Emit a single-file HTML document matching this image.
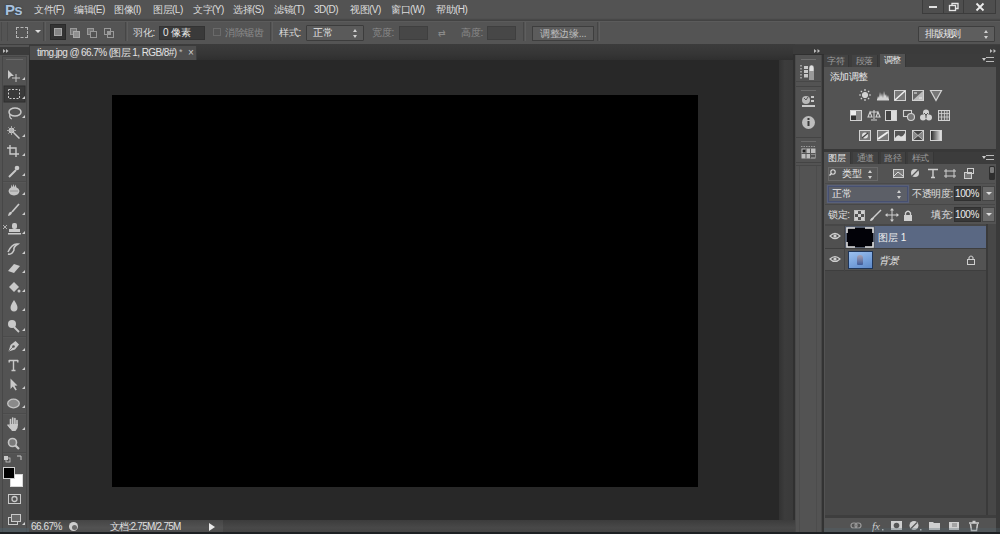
<!DOCTYPE html>
<html><head><meta charset="utf-8">
<style>
*{margin:0;padding:0;box-sizing:border-box}
html,body{width:1000px;height:534px;overflow:hidden;background:#535353;font-family:"Liberation Sans",sans-serif;font-size:9px;color:#e0e0e0}
.a{position:absolute}
#menubar{left:0;top:0;width:1000px;height:21px;background:linear-gradient(#535353 0,#535353 18px,#4d4d4d 19px,#434343 20px)}
#opts{left:0;top:21px;width:1000px;height:23px;background:#545454;border-top:1px solid #5b5b5b}#opts>div{margin-top:-2px}
#gap{left:0;top:44px;width:1000px;height:1px;background:#3f3f3f}
#tools{left:0;top:0;width:29px;height:534px;}
#tabbar{left:29px;top:44px;width:766px;height:16px;background:linear-gradient(#3c3c3c,#363636 60%,#2f2f2f)}
#doctab{left:30px;top:46px;width:167px;height:14px;background:#4e4e4e;border-right:1px solid #3c3c3c}
#pasteboard{left:29px;top:60px;width:750px;height:460px;background:#282828}
#image{left:112px;top:95px;width:586px;height:392px;background:#000}
#vstrip{left:779px;top:60px;width:14px;height:460px;background:linear-gradient(90deg,#323232,#3c3c3c 40%,#3a3a3a)}
#dock{left:793px;top:45px;width:31px;height:489px;background:#303030}
#dockcol{left:795px;top:55px;width:27px;height:479px;background:#535353}
#panel{left:824px;top:46px;width:176px;height:488px;background:#3b3b3b}
#status{left:29px;top:520px;width:766px;height:14px;background:linear-gradient(#3c3c3c,#484848 55%,#424242)}
.ps{left:5px;top:1px;font-size:15px;line-height:17px;font-weight:bold;color:#a9c0dc;letter-spacing:-0.8px;text-shadow:0 0 1px #2a3a4a,0 0 2px #34404c}
.mi{top:4px;font-size:10px;line-height:12px;color:#dcdcdc;white-space:nowrap;letter-spacing:-0.5px}
.sep{top:2px;width:3px;height:19px;border-left:1px solid #464646;border-right:1px solid #5e5e5e}
.ot{top:7px;font-size:10px;line-height:12px;color:#dedede;white-space:nowrap;letter-spacing:-0.3px}
.dim{color:#8a8a8a}
.inp{top:6px;height:14px;background:#3a3a3a;border:1px solid #333;font-size:10px;line-height:12px;color:#e8e8e8;white-space:nowrap}
.sel{top:5px;height:16px;background:#5a5a5a;border:1px solid #3c3c3c;border-radius:1px;font-size:10px;line-height:14px;color:#e8e8e8;white-space:nowrap}
.ud{position:absolute;right:5px;top:3px;width:5px;height:9px}.ud::before,.ud::after{content:"";position:absolute;left:0;border-left:2.5px solid transparent;border-right:2.5px solid transparent}.ud::before{top:0;border-bottom:3px solid #d0d0d0}.ud::after{bottom:0;border-top:3px solid #d0d0d0}
.btn{top:6px;height:15px;background:#5c5c5c;border:1px solid #3e3e3e;font-size:10px;line-height:13px;color:#bcbcbc;text-align:center;white-space:nowrap;letter-spacing:-0.3px}
.ptab{height:12px;font-size:9px;line-height:13px;color:#9a9a9a;text-align:center;background:#424242;border-right:1px solid #363636;letter-spacing:-0.3px}
.ptab.on{background:#535353;color:#e8e8e8}
.pmenu{width:8px;height:5px;border-top:1px solid #bbb;border-bottom:1px solid #bbb}.pmenu::before{content:"";position:absolute;left:-4px;top:0;border-left:2.5px solid transparent;border-right:2.5px solid transparent;border-top:3px solid #ccc}
.pinp{width:27px;height:15px;background:#383838;border:1px solid #303030;font-size:10px;line-height:13px;color:#ececec;text-align:right;padding-right:2px;letter-spacing:-0.4px}
.pbtn{width:13px;height:15px;background:#6a6a6a;border:1px solid #444}
.pbtn::after{content:"";position:absolute;left:3px;top:5px;border-left:3px solid transparent;border-right:3px solid transparent;border-top:3px solid #ddd}
</style></head><body>
<div id="menubar" class="a">
<div class="a ps">Ps</div>
<div class="a mi" style="left:34px">文件(F)</div>
<div class="a mi" style="left:74px">编辑(E)</div>
<div class="a mi" style="left:114px">图像(I)</div>
<div class="a mi" style="left:153px">图层(L)</div>
<div class="a mi" style="left:193px">文字(Y)</div>
<div class="a mi" style="left:233px">选择(S)</div>
<div class="a mi" style="left:274px">滤镜(T)</div>
<div class="a mi" style="left:314px">3D(D)</div>
<div class="a mi" style="left:350px">视图(V)</div>
<div class="a mi" style="left:391px">窗口(W)</div>
<div class="a mi" style="left:436px">帮助(H)</div>
<div class="a" style="left:922px;top:0;width:74px;height:14px;background:#4e4e4e;border:1px solid #3c3c3c;border-top:none"></div>
<div class="a" style="left:943px;top:0;width:1px;height:13px;background:#3c3c3c"></div>
<div class="a" style="left:963px;top:0;width:1px;height:13px;background:#3c3c3c"></div>
<div class="a" style="left:929px;top:6px;width:8px;height:2px;background:#e0e0e0"></div>
<svg class="a" style="left:948px;top:2px" width="12" height="10" viewBox="0 0 12 10"><rect x="1.5" y="3.5" width="6" height="5" fill="none" stroke="#e6e6e6" stroke-width="1.3"/><path d="M4 3 V1.5 H10 V6.5 H8" fill="none" stroke="#e6e6e6" stroke-width="1.3"/></svg>
<svg class="a" style="left:975px;top:2px" width="10" height="10" viewBox="0 0 10 10"><path d="M1.5 1.5 L8.5 8.5 M8.5 1.5 L1.5 8.5" stroke="#ececec" stroke-width="1.8"/></svg>

</div>
<div id="opts" class="a">
<div class="a" style="left:1px;top:2px;width:1px;height:19px;background:#4a4a4a"></div>
<div class="a" style="left:7px;top:2px;width:1px;height:19px;background:#4a4a4a"></div>
<div class="a" style="left:16px;top:7px;width:12px;height:11px;border:1px dashed #b4b4b4"></div>
<div class="a" style="left:35px;top:10px;width:0;height:0;border-left:3px solid transparent;border-right:3px solid transparent;border-top:3px solid #ddd"></div>
<div class="a sep" style="left:43px"></div>
<div class="a" style="left:50px;top:4px;width:16px;height:16px;background:#333;border:1px solid #2a2a2a"></div>
<div class="a" style="left:54px;top:8px;width:8px;height:8px;border:1px solid #a8a8a8;background:#858585"></div>
<div class="a" style="left:70px;top:8px;width:7px;height:7px;border:1px solid #999;background:#777"></div>
<div class="a" style="left:73px;top:11px;width:7px;height:7px;border:1px solid #aaa;background:#8f8f8f"></div>
<div class="a" style="left:87px;top:8px;width:7px;height:7px;border:1px solid #999;background:#777"></div>
<div class="a" style="left:90px;top:11px;width:7px;height:7px;border:1px solid #999;background:#535353"></div>
<div class="a" style="left:104px;top:8px;width:7px;height:7px;border:1px solid #999"></div>
<div class="a" style="left:107px;top:11px;width:7px;height:7px;border:1px solid #999"></div>
<div class="a" style="left:107px;top:11px;width:4px;height:4px;background:#999"></div>
<div class="a sep" style="left:125px"></div>
<div class="a ot" style="left:133px">羽化:</div>
<div class="a inp" style="left:159px;width:46px"><span style="padding-left:3px">0 像素</span></div>
<div class="a" style="left:213px;top:8px;width:8px;height:8px;border:1px solid #6a6a6a"></div>
<div class="a ot dim" style="left:225px">消除锯齿</div>
<div class="a sep" style="left:270px"></div>
<div class="a ot" style="left:279px">样式:</div>
<div class="a sel" style="left:306px;width:58px"><span style="padding-left:6px">正常</span><i class="ud"></i></div>
<div class="a ot dim" style="left:372px">宽度:</div>
<div class="a inp" style="left:399px;width:29px;background:#474747;border-color:#3f3f3f"></div>
<div class="a ot dim" style="left:438px;font-size:9px">⇄</div>
<div class="a ot dim" style="left:461px">高度:</div>
<div class="a inp" style="left:487px;width:29px;background:#474747;border-color:#3f3f3f"></div>
<div class="a sep" style="left:523px"></div>
<div class="a btn" style="left:532px;width:62px">调整边缘...</div>
<div class="a sep" style="left:597px"></div>
<div class="a sel" style="left:918px;top:6px;width:77px;height:16px;background:#5e5e5e;border-color:#3e3e3e"><span style="padding-left:6px;letter-spacing:-1.2px">排版规则</span><i class="ud"></i></div>
</div>
<div id="gap" class="a"></div>
<div id="tools" class="a"><svg class="a" style="left:0;top:0" width="29" height="534" viewBox="0 0 29 534"><rect x="0" y="47" width="29" height="8" fill="#3b3b3b"/><path d="M3 49 L5.5 51 L3 53 Z M6 49 L8.5 51 L6 53 Z" fill="#bdbdbd"/><rect x="2.5" y="56.5" width="24" height="477" fill="none" stroke="#474747"/><rect x="4" y="86" width="21" height="16" fill="#3a3a3a" stroke="#2e2e2e"/><rect x="3" y="181" width="23" height="1" fill="#4b4b4b"/><rect x="3" y="182" width="23" height="1" fill="#575757"/><rect x="3" y="336" width="23" height="1" fill="#4b4b4b"/><rect x="3" y="337" width="23" height="1" fill="#575757"/><rect x="3" y="413" width="23" height="1" fill="#4b4b4b"/><rect x="3" y="414" width="23" height="1" fill="#575757"/><rect x="3" y="452" width="23" height="1" fill="#4b4b4b"/><rect x="3" y="453" width="23" height="1" fill="#575757"/><rect x="6" y="59" width="17" height="1" fill="#6a6a6a"/><g transform="translate(0,75)"><path d="M8 -5 L8 4 L11 1 L14 1 Z" fill="#c9c9c9"/><path d="M16 -1 V7 M12 3 H20" stroke="#c9c9c9" stroke-width="1"/></g><g transform="translate(0,94)"><rect x="8.5" y="-4.5" width="11" height="9" fill="none" stroke="#c9c9c9" stroke-dasharray="2,1.5"/></g><g transform="translate(0,113)"><ellipse cx="15" cy="-1" rx="6" ry="4" fill="none" stroke="#c9c9c9" stroke-width="1.5"/><path d="M10 1 Q9 5 12 6" stroke="#c9c9c9" fill="none" stroke-width="1.3"/></g><g transform="translate(0,132)"><circle cx="11.5" cy="-1.5" r="2.8" fill="#c9c9c9"/><path d="M11.5 -6 V3 M7 -1.5 H16 M8.3 -4.7 L14.7 1.7 M8.3 1.7 L14.7 -4.7" stroke="#b0b0b0" stroke-width="0.9"/><path d="M13.5 0.5 L19.5 6.5" stroke="#c9c9c9" stroke-width="1.5"/></g><g transform="translate(0,151)"><path d="M10 -6 V3 H19 M7 -3 H16 V6" stroke="#c9c9c9" fill="none" stroke-width="1.4"/></g><g transform="translate(0,171)"><path d="M9 6 L16 -1" stroke="#c9c9c9" stroke-width="2"/><circle cx="17" cy="-3" r="2.3" fill="#c9c9c9"/></g><g transform="translate(0,190)"><path d="M8.5 1 Q9 -2 11 -2.5 L11.5 -5.5 L12.5 -2.8 L13.5 -6 L14.5 -2.8 L15.5 -5.5 L16.5 -2.5 Q19 -2 19.5 1 Q19 5 14 5.5 Q9 5 8.5 1 Z" fill="#c4c4c4"/><path d="M10 1 H18" stroke="#8a8a8a" stroke-width="0.8"/></g><g transform="translate(0,210)"><path d="M19 -6 L12 2" stroke="#c9c9c9" stroke-width="1.6"/><path d="M8 6 Q9 1 12 2 Q12 5 8 6 Z" fill="#c9c9c9"/></g><g transform="translate(0,229)"><rect x="12" y="-6" width="5" height="6" rx="2" fill="#c9c9c9"/><rect x="9" y="0" width="11" height="3" fill="#c9c9c9"/><rect x="8" y="4" width="13" height="1.5" fill="#c9c9c9"/><path d="M3 -4 L7 0 M7 -4 L3 0" stroke="#c9c9c9" stroke-width="0.8"/></g><g transform="translate(0,249)"><path d="M8 3 Q12 -6 18 -5 Q13 -2 14 1 Q12 6 8 5" fill="none" stroke="#c9c9c9" stroke-width="1.5"/></g><g transform="translate(0,268)"><path d="M8 3 L14 -4 L20 -2 L14 5 Z" fill="#c9c9c9"/></g><g transform="translate(0,287)"><path d="M9 0 L14 -5 L19 0 L14 5 Z" fill="#c9c9c9"/><circle cx="19" cy="4" r="1.5" fill="#c9c9c9"/></g><g transform="translate(0,306)"><path d="M14 -6 Q19 1 17 4 Q14 7 11 4 Q9 1 14 -6 Z" fill="#c9c9c9"/></g><g transform="translate(0,326)"><circle cx="12" cy="-2" r="4" fill="#c9c9c9"/><path d="M14 1 L19 6" stroke="#c9c9c9" stroke-width="1.8"/></g><g transform="translate(0,346)"><path d="M8.5 5.5 L10.5 -1 L15.5 -5 L19 -1.5 L15 3.5 Z" fill="#c9c9c9"/><circle cx="13.5" cy="0.5" r="1.3" fill="#535353"/><path d="M8.5 5.5 L13 1" stroke="#535353" stroke-width="0.7"/></g><g transform="translate(0,365)"><path d="M9 -4.5 H18 M13.5 -5 V5.5 M11.5 5.5 H15.5 M9.2 -5 V-2.5 M17.8 -5 V-2.5" stroke="#c9c9c9" stroke-width="1.4" fill="none"/></g><g transform="translate(0,384)"><path d="M10.5 -5.5 L10.5 5 L12.8 2.5 L15.5 6.5 L16.8 5.8 L14.5 1.8 L17.5 1.5 Z" fill="#c9c9c9"/></g><g transform="translate(0,403)"><ellipse cx="13.5" cy="0.5" rx="5.8" ry="4.3" fill="#8a8a8a" stroke="#c4c4c4" stroke-width="1.3"/></g><g transform="translate(0,425)"><path d="M10.5 0 V-5.5 M12.7 -0.5 V-7 M14.9 -0.5 V-6.5 M17 0 V-4.5 M8 0 L10.5 3" stroke="#c9c9c9" stroke-width="1.6" stroke-linecap="round"/><path d="M9.5 -1 H18 L17.5 3 L15.5 6 H12 L9.5 2.5 Z" fill="#c9c9c9"/></g><g transform="translate(0,444)"><circle cx="12.5" cy="-1.5" r="4" fill="#7a7a7a" stroke="#c4c4c4" stroke-width="1.6"/><path d="M15.5 1.5 L19 5" stroke="#c9c9c9" stroke-width="2.2"/></g><g transform="translate(0,459)"><rect x="4" y="-3" width="4" height="4" fill="#c9c9c9"/><rect x="6" y="-1" width="4" height="4" fill="none" stroke="#c9c9c9" stroke-width="0.8"/><path d="M17 -3 H21 V1" stroke="#c9c9c9" fill="none" stroke-width="1"/></g><g transform="translate(0,499)"><rect x="8.5" y="-4.5" width="12" height="9" fill="none" stroke="#c9c9c9"/><circle cx="14.5" cy="0" r="2.5" fill="none" stroke="#c9c9c9" stroke-width="1.3"/></g><g transform="translate(0,522)"><rect x="8.5" y="-4.5" width="9" height="7" fill="#535353" stroke="#c9c9c9"/><rect x="11.5" y="-7.5" width="9" height="7" fill="#6a6a6a" stroke="#c9c9c9"/></g><path d="M22 80 L25 80 L25 77 Z" fill="#cfcfcf"/><path d="M22 99 L25 99 L25 96 Z" fill="#cfcfcf"/><path d="M22 118 L25 118 L25 115 Z" fill="#cfcfcf"/><path d="M22 137 L25 137 L25 134 Z" fill="#cfcfcf"/><path d="M22 156 L25 156 L25 153 Z" fill="#cfcfcf"/><path d="M22 176 L25 176 L25 173 Z" fill="#cfcfcf"/><path d="M22 195 L25 195 L25 192 Z" fill="#cfcfcf"/><path d="M22 215 L25 215 L25 212 Z" fill="#cfcfcf"/><path d="M22 234 L25 234 L25 231 Z" fill="#cfcfcf"/><path d="M22 254 L25 254 L25 251 Z" fill="#cfcfcf"/><path d="M22 273 L25 273 L25 270 Z" fill="#cfcfcf"/><path d="M22 292 L25 292 L25 289 Z" fill="#cfcfcf"/><path d="M22 311 L25 311 L25 308 Z" fill="#cfcfcf"/><path d="M22 331 L25 331 L25 328 Z" fill="#cfcfcf"/><path d="M22 351 L25 351 L25 348 Z" fill="#cfcfcf"/><path d="M22 370 L25 370 L25 367 Z" fill="#cfcfcf"/><path d="M22 389 L25 389 L25 386 Z" fill="#cfcfcf"/><path d="M22 408 L25 408 L25 405 Z" fill="#cfcfcf"/><path d="M22 430 L25 430 L25 427 Z" fill="#cfcfcf"/><path d="M22 525 L25 525 L25 522 Z" fill="#cfcfcf"/><rect x="3.5" y="467.5" width="11" height="11" fill="#000" stroke="#d8d8d8"/><rect x="10.5" y="474.5" width="12" height="12" fill="#fff" stroke="#d8d8d8"/><rect x="3.5" y="467.5" width="11" height="11" fill="#000" stroke="#cfcfcf"/></svg></div>
<div id="tabbar" class="a"></div>
<div id="doctab" class="a"><span class="a" style="left:7px;top:1px;font-size:10px;line-height:12px;color:#e2e2e2;white-space:nowrap;letter-spacing:-0.6px">timg.jpg @ 66.7% (图层 1, RGB/8#)</span><span class="a" style="left:149px;top:0px;font-size:9px;line-height:12px;color:#bbb">*</span><span class="a" style="left:158px;top:1px;font-size:10px;line-height:12px;color:#cfcfcf">×</span></div>
<div id="pasteboard" class="a"></div>
<div id="image" class="a"></div>
<div id="vstrip" class="a"></div>
<div id="dock" class="a"></div>
<div class="a" style="left:793px;top:45px;width:207px;height:9px;background:#3b3b3b"></div>
<svg class="a" style="left:793px;top:46px" width="207" height="488" viewBox="0 0 207 488">
<path d="M21 3 L23.5 5 L21 7 Z M24.5 3 L27 5 L24.5 7 Z" fill="#bdbdbd"/>
<path d="M197 3 L199.5 5 L197 7 Z M200.5 3 L203 5 L200.5 7 Z" fill="#bdbdbd"/>
</svg>
<div class="a" style="left:795px;top:55px;width:27px;height:479px;background:#535353;border-left:1px solid #4a4a4a;border-right:1px solid #474747"></div>
<svg class="a" style="left:795px;top:55px" width="27" height="479" viewBox="0 0 27 479">
<rect x="6" y="4" width="15" height="1" fill="#6e6e6e"/>
<rect x="1" y="31" width="25" height="1" fill="#444"/>
<rect x="6" y="35" width="15" height="1" fill="#6e6e6e"/>
<rect x="1" y="82" width="25" height="1" fill="#444"/>
<rect x="6" y="86" width="15" height="1" fill="#6e6e6e"/>
<rect x="1" y="107" width="25" height="1" fill="#444"/><rect x="1" y="110" width="25" height="1" fill="#474747"/><rect x="4" y="111" width="1" height="368" fill="#4c4c4c"/><rect x="21" y="111" width="1" height="368" fill="#4c4c4c"/>
<g fill="#9a9a9a"><rect x="5" y="10" width="2" height="1.5"/><rect x="5" y="13" width="2" height="1.5"/><rect x="5" y="16" width="2" height="1.5"/><rect x="5" y="19" width="2" height="1.5"/><rect x="5" y="22" width="2" height="1.5"/></g>
<g fill="#c8c8c8"><rect x="9" y="11" width="4" height="3"/><rect x="9" y="15" width="4" height="3"/><rect x="9" y="19" width="4" height="3.5"/></g>
<path d="M14 25 V13 Q14 10 16.5 10 Q19 10 19 13 V25 Z" fill="#9a9a9a"/><path d="M14.5 16 V13 Q14.5 10.5 16.5 10.5 Q18.5 10.5 18.5 13 V16 Z" fill="#e0e0e0"/>
<rect x="1" y="26" width="25" height="1" fill="#474747"/>
<circle cx="11" cy="45" r="4" fill="#b8b8b8"/><path d="M9 43 L11 45 L13 42" stroke="#555" stroke-width="1" fill="none"/>
<rect x="16" y="41" width="3" height="2" fill="#c8c8c8"/><rect x="16" y="45" width="3" height="2" fill="#c8c8c8"/>
<rect x="7" y="50" width="13" height="2" fill="#c8c8c8"/>
<circle cx="13.5" cy="67.5" r="6.5" fill="#bdbdbd"/>
<rect x="12.5" y="66" width="2" height="5" fill="#3a3a3a"/><rect x="12.5" y="63" width="2" height="2" fill="#3a3a3a"/>
<path d="M6 91.5 H21" stroke="#9a9a9a" stroke-dasharray="1.5,1"/>
<rect x="6.5" y="93.5" width="14" height="10" fill="#bdbdbd"/>
<path d="M6.5 98.5 H20.5 M11 93.5 V103.5 M15.5 93.5 V103.5" stroke="#555"/>
<rect x="7.5" y="94.5" width="3" height="3" fill="#222"/><rect x="16" y="99.5" width="4" height="3" fill="#555"/>
</svg>
<div class="a" style="left:822px;top:55px;width:2px;height:479px;background:#333"></div>

<div id="panel" class="a">
<div class="a" style="left:0;top:8px;width:176px;height:13px;background:#3c3c3c"></div>
<div class="a ptab" style="left:0px;top:9px;width:25px;height:12px">字符</div>
<div class="a ptab" style="left:28px;top:9px;width:26px;height:12px">段落</div>
<div class="a ptab on" style="left:56px;top:8px;width:26px;height:13px">调整</div>
<div class="a pmenu" style="left:162px;top:11px"></div><svg class="a" style="left:165px;top:2px" width="10" height="6" viewBox="0 0 10 6"><path d="M1 1 L3.5 3 L1 5 Z M4.5 1 L7 3 L4.5 5 Z" fill="#bdbdbd"/></svg>
<div class="a" style="left:0;top:21px;width:172px;height:82px;background:#535353"></div>
<div class="a" style="left:6px;top:25px;font-size:10px;line-height:12px;color:#e6e6e6;letter-spacing:-0.6px">添加调整</div>
<svg class="a" style="left:0;top:0" width="176" height="120" viewBox="0 0 176 120"><g transform="translate(41,49)" stroke="#d2d2d2" stroke-width="1.2"><circle r="2.5" fill="#d2d2d2"/><path d="M0 -6 V-4 M0 4 V6 M-6 0 H-4 M4 0 H6 M-4.2 -4.2 L-3 -3 M3 3 L4.2 4.2 M-4.2 4.2 L-3 3 M3 -3 L4.2 -4.2"/></g><g transform="translate(53,44)" fill="#d2d2d2"><path d="M0 10 L1 6 L2 8 L3 2 L4 7 L5 3 L6 8 L7 1 L8 6 L9 4 L10 8 L11 5 L12 10 Z"/><rect y="9" width="12" height="1.5"/></g><g transform="translate(70,44)"><rect x="0.5" y="0.5" width="11" height="10" fill="#777" stroke="#d2d2d2"/><path d="M1 10 L11 1" stroke="#eee" stroke-width="1.5"/></g><g transform="translate(88,44)"><rect x="0.5" y="0.5" width="11" height="10" fill="#666" stroke="#d2d2d2"/><path d="M1 10 L11 1 L11 10 Z" fill="#bbb"/><path d="M2 3 H5 M7 8 H10" stroke="#eee"/></g><g transform="translate(106,44)"><path d="M0.5 0.5 H11.5 L6 10.5 Z" fill="#777" stroke="#d2d2d2" stroke-width="1.2"/></g><g transform="translate(26,64)"><rect x="0.5" y="0.5" width="11" height="10" fill="#888" stroke="#d2d2d2"/><rect x="1" y="1" width="5" height="4" fill="#eee"/><rect x="1" y="6" width="5" height="4" fill="#333"/></g><g transform="translate(50,69)" stroke="#d2d2d2" fill="none" stroke-width="1.1"><path d="M0 -5 V4 M-4 -3 H4 M-6 2 L-4 -3 L-2 2 Z M2 2 L4 -3 L6 2 Z M-3 5 H3"/></g><g transform="translate(61,64)"><rect x="0.5" y="0.5" width="11" height="10" fill="#ddd" stroke="#d2d2d2"/><rect x="1" y="1" width="5" height="9" fill="#444"/></g><g transform="translate(79,64)" stroke="#d2d2d2" fill="none" stroke-width="1.1"><rect x="0.5" y="0.5" width="8" height="6"/><circle cx="8" cy="7" r="3.5" fill="#777"/></g><g transform="translate(102,69)" fill="#d2d2d2"><circle cx="0" cy="-2.5" r="3"/><circle cx="-3" cy="2.5" r="3"/><circle cx="3" cy="2.5" r="3"/><path d="M0 0 V3 M0 0 L-2 -2 M0 0 L2 -2" stroke="#555" stroke-width="1"/></g><g transform="translate(114,64)" stroke="#d2d2d2" fill="#666"><rect x="0.5" y="0.5" width="11" height="10"/><path d="M0.5 3.5 H11.5 M0.5 7 H11.5 M3.5 0.5 V10.5 M6.5 0.5 V10.5 M9 0.5 V10.5" stroke-width="0.8"/></g><g transform="translate(35,84)"><rect x="0.5" y="0.5" width="11" height="10" fill="#777" stroke="#d2d2d2"/><circle cx="6" cy="5.5" r="3" fill="#ddd"/><path d="M3 8 L9 3" stroke="#444" stroke-width="1.3"/></g><g transform="translate(53,84)"><rect x="0.5" y="0.5" width="11" height="10" fill="#777" stroke="#d2d2d2"/><path d="M1 9 L11 2" stroke="#eee" stroke-width="2"/></g><g transform="translate(70,84)"><rect x="0.5" y="0.5" width="11" height="10" fill="#555" stroke="#d2d2d2"/><path d="M1 8 Q4 4 6 6 Q8 8 11 3 L11 10 L1 10 Z" fill="#ddd"/></g><g transform="translate(88,84)"><rect x="0.5" y="0.5" width="11" height="10" fill="#888" stroke="#d2d2d2"/><path d="M1 1 L6 5.5 L11 1 M1 10 L6 5.5 L11 10" fill="#444" stroke="#ccc" stroke-width="0.8"/></g><g transform="translate(106,84)"><defs><linearGradient id="gm"><stop offset="0" stop-color="#222"/><stop offset="1" stop-color="#eee"/></linearGradient></defs><rect x="0.5" y="0.5" width="11" height="10" fill="url(#gm)" stroke="#d2d2d2"/></g></svg>
<div class="a" style="left:0;top:103px;width:176px;height:3px;background:#383838"></div>
<div class="a" style="left:0;top:106px;width:176px;height:12px;background:#3c3c3c"></div>
<div class="a ptab on" style="left:0px;top:106px;width:27px">图层</div>
<div class="a ptab" style="left:29px;top:106px;width:26px">通道</div>
<div class="a ptab" style="left:57px;top:106px;width:25px">路径</div>
<div class="a ptab" style="left:84px;top:106px;width:26px">样式</div>
<div class="a pmenu" style="left:162px;top:109px"></div>
<div class="a" style="left:0;top:118px;width:172px;height:370px;background:#535353"></div>
</div>

<div class="a" style="left:828px;top:167px;width:50px;height:14px;background:#565656;border:1px solid #686868;font-size:10px;line-height:12px;color:#e6e6e6;white-space:nowrap"><span style="padding-left:13px">类型</span><i class="ud" style="right:4px;top:2px"></i></div>
<svg class="a" style="left:824px;top:160px" width="176" height="100" viewBox="0 0 176 100">
<circle cx="9" cy="12" r="2.2" fill="none" stroke="#ddd" stroke-width="1.1"/><path d="M7.5 13.5 L5.5 15.5" stroke="#ddd" stroke-width="1.2"/>
<g fill="none" stroke="#cfcfcf">
<rect x="69.5" y="9.5" width="10" height="8" fill="#777"/>
<path d="M70 16 L74 12 L79 16" stroke="#ddd"/>
</g>
<circle cx="91" cy="13" r="4" fill="#cfcfcf"/><path d="M88 16 L94 10" stroke="#555" stroke-width="1.2"/>
<path d="M104 9.5 H114 M109 9.5 V17.5 M107 17.5 H111" stroke="#cfcfcf" stroke-width="1.4" fill="none"/>
<path d="M122 9 V18 M130 9 V18 M120 11 H132 M120 16 H132" stroke="#cfcfcf" stroke-width="1" fill="none"/>
<rect x="140.5" y="12.5" width="7" height="6" fill="#777" stroke="#cfcfcf"/><rect x="143.5" y="8.5" width="6" height="5" fill="none" stroke="#cfcfcf"/>
<rect x="165" y="6" width="6" height="14" rx="1.5" fill="#2e2e2e"/><rect x="166" y="7" width="4" height="6" rx="1" fill="#7a7a7a"/>
</svg>
<div class="a" style="left:825px;top:183px;width:170px;height:20px;border-top:1px solid #4a4a4a"></div>
<div class="a" style="left:828px;top:186px;width:80px;height:16px;background:#5c5f67;border:1px solid #475070;font-size:10px;line-height:14px;color:#ececec;white-space:nowrap;box-shadow:0 0 1px 1px #58607a"><span style="padding-left:3px">正常</span><i class="ud" style="right:5px;top:3px"></i></div>
<div class="a" style="left:912px;top:188px;font-size:10px;line-height:12px;color:#e0e0e0;letter-spacing:-0.4px;white-space:nowrap">不透明度:</div>
<div class="a pinp" style="left:954px;top:186px">100%</div>
<div class="a pbtn" style="left:982px;top:186px"></div>
<div class="a" style="left:825px;top:204px;width:170px;height:1px;background:#474747"></div>
<div class="a" style="left:828px;top:209px;font-size:10px;line-height:12px;color:#e0e0e0;letter-spacing:-0.4px;white-space:nowrap">锁定:</div>
<svg class="a" style="left:850px;top:206px" width="70" height="18" viewBox="0 0 70 18">
<g fill="#cfcfcf"><rect x="5" y="5" width="3" height="3"/><rect x="8" y="8" width="3" height="3"/><rect x="5" y="11" width="3" height="3"/><rect x="11" y="5" width="3" height="3"/><rect x="11" y="11" width="3" height="3"/></g>
<rect x="4.5" y="4.5" width="10" height="10" fill="none" stroke="#bbb"/>
<path d="M21 14 L31 4" stroke="#cfcfcf" stroke-width="1.5"/><path d="M20 15 Q21 11 24 12 Q23 15 20 15Z" fill="#cfcfcf"/>
<path d="M42 3 V15 M36 9 H48" stroke="#cfcfcf" stroke-width="1"/><path d="M42 2 L40 4.5 H44 Z M42 16 L40 13.5 H44 Z M35 9 L37.5 7 V11 Z M49 9 L46.5 7 V11 Z" fill="#cfcfcf"/>
<rect x="54" y="9" width="8" height="6" fill="#cfcfcf"/><path d="M55.5 9 V7 Q58 3.5 60.5 7 V9" fill="none" stroke="#cfcfcf" stroke-width="1.3"/>
</svg>
<div class="a" style="left:931px;top:209px;font-size:10px;line-height:12px;color:#e0e0e0;letter-spacing:-0.4px;white-space:nowrap">填充:</div>
<div class="a pinp" style="left:954px;top:207px">100%</div>
<div class="a pbtn" style="left:982px;top:207px"></div>
<div class="a" style="left:825px;top:224px;width:161px;height:291px;background:#474747"></div>
<div class="a" style="left:825px;top:226px;width:161px;height:23px;background:#505050;border-bottom:1px solid #3e3e3e"></div>
<div class="a" style="left:845px;top:226px;width:30px;height:22px;background:#525a6a"></div><div class="a" style="left:875px;top:226px;width:111px;height:22px;background:#5a6883"></div>
<div class="a" style="left:825px;top:249px;width:161px;height:22px;background:#535353;border-bottom:1px solid #3e3e3e"></div>
<div class="a" style="left:844px;top:224px;width:1px;height:48px;background:#444"></div>
<svg class="a" style="left:828px;top:228px" width="14" height="44" viewBox="0 0 14 44">
<path d="M2 8 Q7 3 12 8 Q7 13 2 8Z" fill="none" stroke="#cfcfcf" stroke-width="1.2"/><circle cx="7" cy="8" r="1.6" fill="#cfcfcf"/>
<path d="M2 31 Q7 26 12 31 Q7 36 2 31Z" fill="none" stroke="#cfcfcf" stroke-width="1.2"/><circle cx="7" cy="31" r="1.6" fill="#cfcfcf"/>
</svg>
<svg class="a" style="left:846px;top:227px" width="28" height="21" viewBox="0 0 28 21"><rect x="1" y="1" width="26" height="19" fill="#020208"/><path d="M1 6 V1 H9 M19 1 H27 V6 M27 15 V20 H19 M9 20 H1 V15" fill="none" stroke="#e0e0e0" stroke-width="1.6"/></svg>
<div class="a" style="left:878px;top:232px;font-size:10px;line-height:12px;color:#f0f0f0;white-space:nowrap">图层 1</div>
<div class="a" style="left:848px;top:251px;width:25px;height:18px;background:linear-gradient(160deg,#9cc0ee,#78a2dc 55%,#5d88c8);border:1px solid #1f3558"></div>
<div class="a" style="left:857px;top:255px;width:6px;height:10px;border-radius:3px 3px 1px 1px;background:linear-gradient(#a8a0b0,#3e5a9a)"></div>
<div class="a" style="left:879px;top:255px;font-size:10px;line-height:12px;color:#e8e8e8;font-style:italic;white-space:nowrap">背景</div>
<svg class="a" style="left:966px;top:254px" width="10" height="12" viewBox="0 0 10 12"><rect x="1.5" y="5.5" width="7" height="5" fill="none" stroke="#cfcfcf"/><path d="M3 5.5 V3.5 Q5 0.5 7 3.5 V5.5" fill="none" stroke="#cfcfcf" stroke-width="1.1"/></svg>
<div class="a" style="left:825px;top:515px;width:171px;height:3px;background:#3e3e3e"></div>
<div class="a" style="left:825px;top:518px;width:171px;height:16px;background:#535353"></div>
<svg class="a" style="left:824px;top:515px" width="176" height="19" viewBox="0 0 176 19">
<g stroke="#9a9a9a" fill="none" stroke-width="1.2"><rect x="27" y="8" width="6" height="5" rx="2.5"/><rect x="31" y="8" width="6" height="5" rx="2.5"/></g>
<text x="48" y="15" font-family="Liberation Serif" font-style="italic" font-size="11" fill="#d0d0d0">fx</text><rect x="58" y="14" width="1.5" height="1.5" fill="#ccc"/>
<rect x="67" y="6" width="11" height="9" fill="#cfcfcf"/><circle cx="72.5" cy="10.5" r="2.8" fill="#555"/>
<circle cx="90" cy="10.5" r="4.5" fill="#cfcfcf"/><path d="M87 13.5 L93 7.5" stroke="#555" stroke-width="1.3"/><rect x="96" y="14" width="1.5" height="1.5" fill="#ccc"/>
<path d="M105 7 H109 L110 8 H116 V15 H105 Z" fill="#cfcfcf"/>
<rect x="125" y="7" width="10" height="8" fill="#cfcfcf"/><path d="M128 9 H133 M128 11 H133" stroke="#777"/>
<path d="M145 8 H155 M146.5 9 L147.5 15.5 H152.5 L153.5 9 M148.5 6.5 H151.5" stroke="#cfcfcf" stroke-width="1.5" fill="none"/>
</svg>
<div class="a" style="left:986px;top:224px;width:10px;height:291px;background:#474747;border-left:2px solid #3a3a3a"></div>
<div class="a" style="left:996px;top:46px;width:4px;height:488px;background:#3a3a3a"></div>
<div id="status" class="a">
<div class="a" style="left:0;top:0;width:194px;height:14px;background:linear-gradient(#454545,#525252 55%,#4a4a4a)"></div>
<span class="a" style="left:2px;top:1px;font-size:10px;line-height:12px;color:#e0e0e0;letter-spacing:-0.5px">66.67%</span>
<div class="a" style="left:40px;top:2px;width:9px;height:9px;border-radius:50%;background:#cfcfcf"></div>
<div class="a" style="left:43px;top:5px;width:5px;height:5px;border-radius:50%;background:#6a6a6a"></div>
<span class="a" style="left:81px;top:1px;font-size:10px;line-height:12px;color:#e0e0e0;letter-spacing:-0.75px">文档:2.75M/2.75M</span>
<div class="a" style="left:180px;top:3px;width:0;height:0;border-top:4px solid transparent;border-bottom:4px solid transparent;border-left:6px solid #e8e8e8"></div>
</div>
<div class="a" style="left:0;top:528px;width:29px;height:4px;background:rgba(80,100,110,0.45)"></div>
<div class="a" style="left:824px;top:528px;width:176px;height:4px;background:rgba(80,100,110,0.3)"></div>
<div class="a" style="left:0;top:532px;width:1000px;height:2px;background:#1d2023"></div>
</body></html>
